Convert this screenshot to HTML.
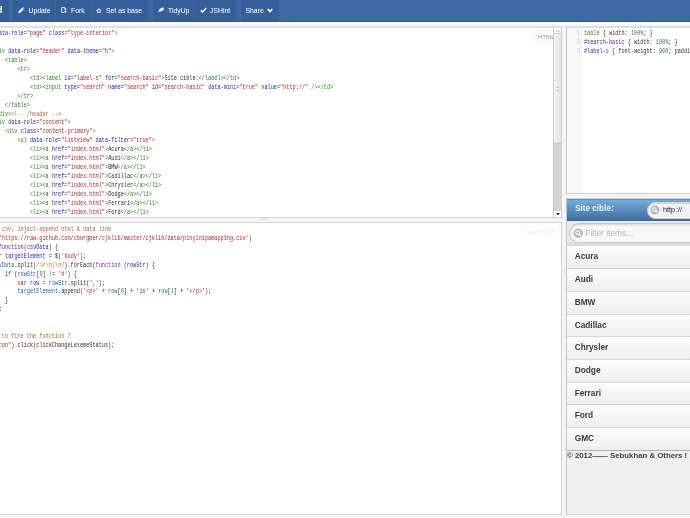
<!DOCTYPE html>
<html lang="en">
<head>
<meta charset="utf-8">
<title>Edit fiddle - JSFiddle</title>
<style>
html, body { margin:0; padding:0; }
body { width:690px; height:518px; overflow:hidden; position:relative; background:#f4f4f4; font-family:"Liberation Sans", Arial, sans-serif; }
#root { position:absolute; left:0; top:0; width:690px; height:518px; overflow:hidden; will-change:transform; }
.abs { position:absolute; }
#bar { left:0; top:0; width:690px; height:22px; background:#3c69a4; border-bottom:1px solid #2c5a96; box-sizing:border-box; }
.btn { position:absolute; top:0; height:21px; background:#345f99; }
.sep { position:absolute; top:0; width:1px; height:21px; background:#3b67a1; }
.bt { position:absolute; top:0; height:21px; line-height:21px; font-size:6.85px; color:#fff; white-space:nowrap; }
.panel { position:absolute; background:#fff; border:1px solid #d2d2d2; box-sizing:border-box; overflow:hidden; }
.code { position:absolute; font-family:"Liberation Mono", "DejaVu Sans Mono", monospace; font-size:6.4px; line-height:8.93px; white-space:pre; opacity:0.9; transform-origin:0 0; transform:scaleX(0.8146); color:#111; }
.ln { height:8.93px; }
.t { color:#117700; } .a { color:#0000cc; } .s { color:#aa1111; } .c { color:#aa5500; }
.k { color:#770088; } .d { color:#0000ff; } .v { color:#0055aa; } .n { color:#116644; } .r { color:#ff5500; } .b { color:#3300aa; }
.lbl { position:absolute; font-size:6.5px; color:#999; background:#fff; }
.li { position:absolute; left:0; width:124px; height:22.7px; box-sizing:border-box; border-top:1px solid #d6d6d6; background:linear-gradient(#fdfdfd,#eeeeee); font-weight:bold; font-size:8.3px; line-height:21.10px; color:#2f3e46; padding-left:7.700px; }
</style>
</head>
<body>
<div id="root">
<div id="bar" class="abs">
  <div class="btn" style="left:0;width:8.5px"></div>
  <div class="btn" style="left:13px;width:135px"></div>
  <div class="btn" style="left:152.5px;width:83px"></div>
  <div class="btn" style="left:240.5px;width:38.5px"></div>
  <div class="sep" style="left:55px"></div>
  <div class="sep" style="left:90.600px"></div>
  <div class="sep" style="left:194px"></div>
  <div class="bt" style="left:-3.300px;font-weight:bold;font-size:9.500px;line-height:19.500px">d</div>
  <svg class="abs" style="left:18.300px;top:6.800px" width="6.500" height="6.500" viewBox="0 0 14 14"><path d="M0.500 13.500 L1.500 9 L9 1.500 L12.500 5 L5 12.500 Z M10 0.800 L11 0 L14 3 L13.200 4 Z" fill="#fff"/></svg>
  <div class="bt" style="left:28.5px">Update</div>
  <svg class="abs" style="left:60.700px;top:7.200px" width="6.500" height="6.500" viewBox="0 0 13 13"><path d="M1.500 1 H7 L9.500 3.500 V6 M6 11 H1.500 V1 M6.800 1 V3.700 H9.500" fill="none" stroke="#fff" stroke-width="1.700"/><circle cx="8.800" cy="9.200" r="2.300" fill="#fff"/></svg>
  <div class="bt" style="left:71px">Fork</div>
  <svg class="abs" style="left:96.300px;top:7.500px" width="5.700" height="5.700" viewBox="0 0 24 24"><path d="M12 2.500 L14.900 9 L22 9.700 L16.600 14.400 L18.200 21.500 L12 17.800 L5.800 21.500 L7.400 14.400 L2 9.700 L9.100 9 Z" fill="none" stroke="#fff" stroke-width="3.400" stroke-linejoin="round"/></svg>
  <div class="bt" style="left:106px">Set as base</div>
  <svg class="abs" style="left:157.700px;top:7.300px" width="6.500" height="5.500" viewBox="0 0 13 10" preserveAspectRatio="none"><path d="M1 8.500 C1 4 5 1 12 1 C12 6 8 9 1 8.500 Z" fill="#fff"/><path d="M4.500 5.500 C5.500 4 7 3.500 8.500 3.500" fill="none" stroke="#9fb6d6" stroke-width="1"/></svg>
  <div class="bt" style="left:168px">TidyUp</div>
  <svg class="abs" style="left:200px;top:7px" width="7" height="6" viewBox="0 0 14 12"><path d="M1.500 6.500 L5 10 L12.500 2" fill="none" stroke="#fff" stroke-width="3"/></svg>
  <div class="bt" style="left:210px">JSHint</div>
  <div class="bt" style="left:245.5px">Share</div>
  <svg class="abs" style="left:267px;top:8px" width="6" height="5" viewBox="0 0 12 10"><path d="M1.500 2 L6 7 L10.500 2" fill="none" stroke="#fff" stroke-width="3.400"/></svg>
</div>
<div class="abs" style="left:0;top:22px;width:690px;height:2px;background:#fff"></div>
<div class="abs" style="left:0;top:24px;width:690px;height:1px;background:#f8f8f8"></div>

<div class="abs" style="left:258.500px;top:219px;width:8px;height:1px;background:#dddddd"></div>
<div class="abs" style="left:563.500px;top:267px;width:1px;height:8px;background:#dddddd"></div>
<!-- HTML panel -->
<div class="panel" id="p-html" style="left:-1px;top:26px;width:563px;height:192px;border-top:2px solid #e0e0e0">
  <div class="code" style="left:-20.20px;top:2.23px"><div class="ln"><span class="t">&lt;div </span><span class="a">data-role</span>=<span class="s">"page"</span> <span class="a">class</span>=<span class="s">"type-interior"</span><span class="t">&gt;</span></div><div class="ln">&nbsp;</div><div class="ln">    <span class="t">&lt;div </span><span class="a">data-role</span>=<span class="s">"header"</span> <span class="a">data-theme</span>=<span class="s">"b"</span><span class="t">&gt;</span></div><div class="ln">        <span class="t">&lt;table&gt;</span></div><div class="ln">            <span class="t">&lt;tr&gt;</span></div><div class="ln">                <span class="t">&lt;td&gt;&lt;label </span><span class="a">id</span>=<span class="s">"label-s"</span> <span class="a">for</span>=<span class="s">"search-basic"</span><span class="t">&gt;</span>Site cible:<span class="t">&lt;/label&gt;&lt;/td&gt;</span></div><div class="ln">                <span class="t">&lt;td&gt;&lt;input </span><span class="a">type</span>=<span class="s">"search"</span> <span class="a">name</span>=<span class="s">"search"</span> <span class="a">id</span>=<span class="s">"search-basic"</span> <span class="a">data-mini</span>=<span class="s">"true"</span> <span class="a">value</span>=<span class="s">"http://"</span> <span class="t">/&gt;&lt;/td&gt;</span></div><div class="ln">            <span class="t">&lt;/tr&gt;</span></div><div class="ln">        <span class="t">&lt;/table&gt;</span></div><div class="ln">    <span class="t">&lt;/div&gt;</span><span class="c">&lt;!-- /header --&gt;</span></div><div class="ln">    <span class="t">&lt;div </span><span class="a">data-role</span>=<span class="s">"content"</span><span class="t">&gt;</span></div><div class="ln">        <span class="t">&lt;div </span><span class="a">class</span>=<span class="s">"content-primary"</span><span class="t">&gt;</span></div><div class="ln">            <span class="t">&lt;ul </span><span class="a">data-role</span>=<span class="s">"listview"</span> <span class="a">data-filter</span>=<span class="s">"true"</span><span class="t">&gt;</span></div><div class="ln">                <span class="t">&lt;li&gt;&lt;a </span><span class="a">href</span>=<span class="s">"index.html"</span><span class="t">&gt;</span>Acura<span class="t">&lt;/a&gt;&lt;/li&gt;</span></div><div class="ln">                <span class="t">&lt;li&gt;&lt;a </span><span class="a">href</span>=<span class="s">"index.html"</span><span class="t">&gt;</span>Audi<span class="t">&lt;/a&gt;&lt;/li&gt;</span></div><div class="ln">                <span class="t">&lt;li&gt;&lt;a </span><span class="a">href</span>=<span class="s">"index.html"</span><span class="t">&gt;</span>BMW<span class="t">&lt;/a&gt;&lt;/li&gt;</span></div><div class="ln">                <span class="t">&lt;li&gt;&lt;a </span><span class="a">href</span>=<span class="s">"index.html"</span><span class="t">&gt;</span>Cadillac<span class="t">&lt;/a&gt;&lt;/li&gt;</span></div><div class="ln">                <span class="t">&lt;li&gt;&lt;a </span><span class="a">href</span>=<span class="s">"index.html"</span><span class="t">&gt;</span>Chrysler<span class="t">&lt;/a&gt;&lt;/li&gt;</span></div><div class="ln">                <span class="t">&lt;li&gt;&lt;a </span><span class="a">href</span>=<span class="s">"index.html"</span><span class="t">&gt;</span>Dodge<span class="t">&lt;/a&gt;&lt;/li&gt;</span></div><div class="ln">                <span class="t">&lt;li&gt;&lt;a </span><span class="a">href</span>=<span class="s">"index.html"</span><span class="t">&gt;</span>Ferrari<span class="t">&lt;/a&gt;&lt;/li&gt;</span></div><div class="ln">                <span class="t">&lt;li&gt;&lt;a </span><span class="a">href</span>=<span class="s">"index.html"</span><span class="t">&gt;</span>Ford<span class="t">&lt;/a&gt;&lt;/li&gt;</span></div></div>
  <div class="lbl" style="left:534px;top:2px;width:20px;height:12px;line-height:11px;text-indent:2.800px;font-size:6.200px;color:#8f8f8f;border:1px solid #f5f5f5;box-sizing:border-box">HTML</div>
  <div class="abs" style="left:553px;top:0;width:9px;height:190px;background:#d4d4d4;border-left:1px solid #c6c6c6;border-right:1px solid #bcbcbc;box-sizing:border-box"></div>
  <div class="abs" style="left:553px;top:6px;width:9px;height:109.500px;background:linear-gradient(90deg,#f5f5f5,#e3e3e3);border-left:1px solid #cccccc;border-right:1px solid #bbbbbb;border-bottom:1px solid #c0c0c0;box-sizing:border-box"></div>
  <div class="abs" style="left:556px;top:59.200px;width:2.800px;height:0.800px;background:#c4c4c4"></div>
  <div class="abs" style="left:556px;top:61.800px;width:2.800px;height:0.800px;background:#c4c4c4"></div>
  <div class="abs" style="left:553px;top:-1px;width:9px;height:7px;background:#fdfdfd;border:1px solid #cfcfcf;border-top:0;box-sizing:border-box"></div>
  <svg class="abs" style="left:555.500px;top:1px" width="4" height="4" viewBox="0 0 8 8"><path d="M1 6 L4 2 L7 6" fill="none" stroke="#999" stroke-width="1.200"/></svg>
  <div class="abs" style="left:553px;top:182px;width:9px;height:7.500px;background:#fdfdfd;border:1px solid #cfcfcf;box-sizing:border-box"></div>
  <svg class="abs" style="left:555.500px;top:184px" width="4" height="4" viewBox="0 0 8 8"><path d="M0.500 2 L7.500 2 L4 6.500 Z" fill="#111"/></svg>
</div>

<!-- JS panel -->
<div class="panel" id="p-js" style="left:-1px;top:222px;width:563px;height:293px">
  <div class="code" style="left:-20.20px;top:3.03px"><div class="ln"><span class="c">// Get csv, inject-append html &amp; data line</span></div><div class="ln">$.get(<span class="s">'https://raw.github.com/cburgmer/cjklib/master/cjklib/data/pinyinipamapping.csv'</span>)</div><div class="ln">.done(<span class="k">function</span>(<span class="d">csvData</span>) {</div><div class="ln">    <span class="k">var</span> <span class="d">targetElement</span> = $(<span class="s">'body'</span>);</div><div class="ln">    <span class="v">csvData</span>.split(<span class="r">/\r\n|\n/</span>).forEach(<span class="k">function</span> (<span class="d">rowStr</span>) {</div><div class="ln">        <span class="k">if</span> (<span class="v">rowStr</span>[<span class="n">0</span>] != <span class="s">'#'</span>) {</div><div class="ln">            <span class="k">var</span> <span class="d">row</span> = <span class="v">rowStr</span>.split(<span class="s">','</span>);</div><div class="ln">            <span class="v">targetElement</span>.append(<span class="s">'&lt;p&gt;'</span> + <span class="v">row</span>[<span class="n">0</span>] + <span class="s">'is'</span> + <span class="v">row</span>[<span class="n">1</span>] + <span class="s">'&lt;/p&gt;'</span>);</div><div class="ln">        }</div><div class="ln">    });</div><div class="ln">&nbsp;</div><div class="ln">&nbsp;</div><div class="ln"><span class="c">// How to fire the function ?</span></div><div class="ln">$( <span class="s">"#icon"</span>).click(clickChangeLexemeStatus);</div></div>
  <div class="lbl" style="left:521px;top:2.500px;width:37.500px;height:12.500px;line-height:10.500px;text-indent:3px;color:#eeeeee;font-size:6.350px;border:1px solid #f9f9f9;box-sizing:border-box">JavaScript</div>
</div>

<!-- CSS panel -->
<div class="panel" id="p-css" style="left:566px;top:26px;width:130px;height:168px;border-top:2px solid #dedede;border-left-color:#c4c4c4">
  <div class="abs" style="left:0;top:0;width:14px;height:167px;background:#f8f8f8;border-right:1px solid #f0f0f0"></div>
  <div class="code" style="left:9.500px;top:2.23px;color:#c0c0c0">1
2
3</div>
  <div class="code" style="left:16.500px;top:2.23px"><div class="ln"><span class="t">table</span> { width: <span class="n">100%</span>; }</div><div class="ln"><span class="b">#search-basic</span> { width: <span class="n">100%</span>; }</div><div class="ln"><span class="b">#label-s</span> { font-weight: <span class="n">900</span>; padding: <span class="n">0</span> <span class="n">10px</span>; }</div></div>
</div>

<!-- Result panel -->
<div class="panel" id="p-res" style="left:566px;top:198px;width:130px;height:317px;background:#efefef;border-left-color:#c4c4c4">
  <div class="abs" style="left:0;top:-0.500px;width:130px;height:22.500px;background:linear-gradient(#72add8,#3f6fa3);border-top:1px solid #5a8fc0;border-bottom:1px solid #3d689a;box-sizing:border-box"></div>
  <div class="abs" style="left:8px;top:0px;height:22px;line-height:20px;font-size:8.200px;font-weight:bold;color:#fff;text-shadow:0 -0.500px 0.500px #254f7a;white-space:nowrap">Site cible:</div>
  <div class="abs" style="left:79.500px;top:3px;width:70px;height:16.500px;border-radius:8.500px;background:#f3f3f3;border:1px solid #d8d0cc;box-sizing:border-box;box-shadow:inset 0 1px 1.500px rgba(0,0,0,.12)"></div>
  <svg class="abs" style="left:83.300px;top:5.700px" width="10" height="10" viewBox="0 0 20 20"><circle cx="10" cy="10" r="9" fill="#b9b9b9"/><circle cx="9" cy="9" r="3.500" fill="none" stroke="#fff" stroke-width="2"/><path d="M11.500 11.500 L15 15" stroke="#fff" stroke-width="2.500"/></svg>
  <div class="abs" style="left:96px;top:2.700px;height:15.500px;line-height:15.500px;font-size:7.200px;color:#222;white-space:nowrap">http<span style="margin-left:1px">://</span></div>

  <div class="abs" style="left:0;top:22px;width:130px;height:26px;background:linear-gradient(#e9e9e9 0,#e9e9e9 21px,#dcdcdc 22px,#dcdcdc 26px)"></div>
  <div class="abs" style="left:1.500px;top:24px;width:140px;height:19.500px;border-radius:9.750px;background:#f8f8f8;border:1px solid #c6c6c6;box-sizing:border-box;box-shadow:inset 0 1px 2px rgba(0,0,0,.15)"></div>
  <svg class="abs" style="left:6px;top:28.600px" width="10.500" height="10.500" viewBox="0 0 20 20"><circle cx="10" cy="10" r="9" fill="#b9b9b9"/><circle cx="9" cy="9" r="3.500" fill="none" stroke="#fff" stroke-width="2"/><path d="M11.500 11.500 L15 15" stroke="#fff" stroke-width="2.500"/></svg>
  <div class="abs" style="left:18.300px;top:24.800px;height:19px;line-height:19px;font-size:8.400px;color:#b4b4b4;white-space:nowrap">Filter items...</div>
<div class="li" style="top:46.40px">Acura</div>
<div class="li" style="top:69.10px">Audi</div>
<div class="li" style="top:91.80px">BMW</div>
<div class="li" style="top:114.50px">Cadillac</div>
<div class="li" style="top:137.20px">Chrysler</div>
<div class="li" style="top:159.90px">Dodge</div>
<div class="li" style="top:182.60px">Ferrari</div>
<div class="li" style="top:205.30px">Ford</div>
<div class="li" style="top:228.00px">GMC</div>
  <div class="abs" style="left:0;top:250.70px;width:130px;height:70px;background:#efefef;border-top:1px solid #b3b3b3;box-sizing:border-box;font-size:7.800px;font-weight:bold;line-height:10px;color:#3e3e3e;white-space:nowrap">&copy; 2012&mdash;&mdash; Sebukhan &amp; Others !</div>
</div>
</div>
</body>
</html>
